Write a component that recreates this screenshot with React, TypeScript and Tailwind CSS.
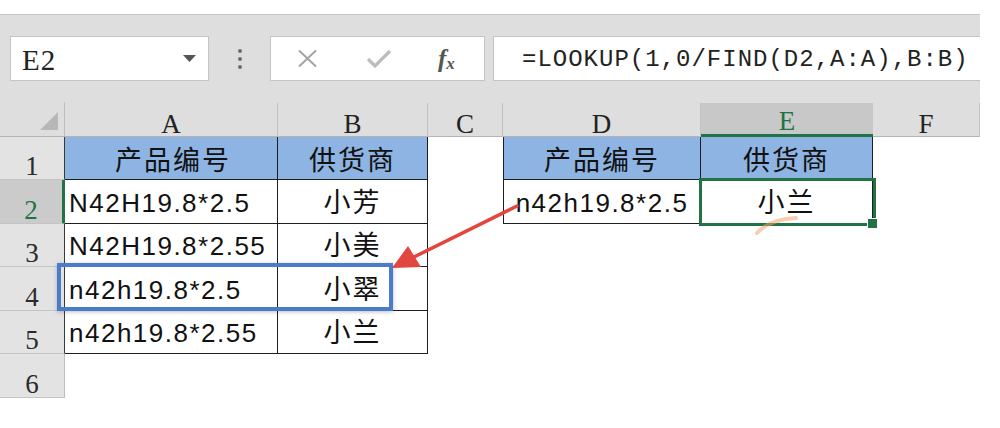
import React from 'react';

// Excel-style sheet: toolbar, column headers, and two small lookup tables
interface SheetRow {
  n: number;
  h: string;
  a?: string;
  b?: string;
  d?: string;
  e?: string;
}

const rows: SheetRow[] = [
  { n: 1, h: 'h-[43px]', a: '产品编号', b: '供货商', d: '产品编号', e: '供货商' },
  { n: 2, h: 'h-[44px]', a: 'N42H19.8*2.5', b: '小芳', d: 'n42h19.8*2.5', e: '小兰' },
  { n: 3, h: 'h-[43px]', a: 'N42H19.8*2.55', b: '小美' },
  { n: 4, h: 'h-[44px]', a: 'n42h19.8*2.5', b: '小翠' },
  { n: 5, h: 'h-[43px]', a: 'n42h19.8*2.55', b: '小兰' },
  { n: 6, h: 'h-[44px]' },
];

const cols = [
  { key: 'A', w: 'w-[213px]' },
  { key: 'B', w: 'w-[150px]' },
  { key: 'C', w: 'w-[75px]' },
  { key: 'D', w: 'w-[198px]' },
  { key: 'E', w: 'w-[172px]' },
  { key: 'F', w: 'w-[107px]' },
];

const Latin: React.FC<{ text: string }> = ({ text }) => (
  <span className="font-['Liberation_Sans',sans-serif] text-[26px] leading-[25px] tracking-[1.5px] text-[#111] whitespace-nowrap">
    {text}
  </span>
);

const Cjk: React.FC<{ text: string }> = ({ text }) => (
  <span className="font-['Noto_Sans_CJK_SC',sans-serif] text-[27px] leading-[27px] tracking-[2px] text-[#111] whitespace-nowrap mb-[2px]">
    {text}
  </span>
);

const Toolbar: React.FC = () => (
  <div className="w-[980px] h-[88px] border-t border-[#c6c6c6] bg-[#dedede] flex items-start pt-[21px] pl-[10px]">
    <div className="w-[199px] h-[45px] bg-white border border-[#c4c4c4] flex items-center justify-between pl-[11px] pr-[12px]">
      <span className="font-['Liberation_Serif',serif] text-[29px] leading-none tracking-[1px] text-[#222] mt-[3px]">E2</span>
      <svg width="13" height="8" viewBox="0 0 13 8">
        <path d="M0 0 L13 0 L6.5 7 Z" fill="#555" />
      </svg>
    </div>
    <div className="w-[61px] h-[45px] flex flex-col items-center justify-center gap-[4px]">
      <span className="w-[4px] h-[4px] rounded-full bg-[#6c6c6c]" />
      <span className="w-[4px] h-[4px] rounded-full bg-[#6c6c6c]" />
      <span className="w-[4px] h-[4px] rounded-full bg-[#6c6c6c]" />
    </div>
    <div className="w-[215px] h-[45px] bg-white border border-[#c4c4c4] flex items-center">
      <svg className="ml-[26px]" width="21" height="19" viewBox="0 0 21 19">
        <path d="M2 1.5 L19 17.5 M19 1.5 L2 17.5" stroke="#a4a4a4" strokeWidth="2" />
      </svg>
      <svg className="ml-[48px]" width="26" height="20" viewBox="0 0 26 20">
        <path d="M2 10 L9 17 L24 2" stroke="#bdbdbd" strokeWidth="3.2" fill="none" />
      </svg>
      <span className="ml-[46px] font-['Liberation_Serif',serif] italic font-bold text-[#555] text-[25px] leading-none">
        f<span className="text-[17px] align-[-2px]">x</span>
      </span>
    </div>
    <div className="ml-[8px] flex-1 h-[45px] bg-white border border-[#c4c4c4] border-r-0 flex items-center pl-[28px] overflow-hidden">
      <span className="font-['Liberation_Mono',monospace] text-[24px] leading-none tracking-[1px] text-[#222] whitespace-nowrap mt-[3px]">
        =LOOKUP(1,0/FIND(D2,A:A),B:B)
      </span>
    </div>
  </div>
);

const ColumnHeader: React.FC = () => (
  <div className="flex w-[980px] h-[35px] bg-[#dedede] border-b border-[#b4b4b4]">
    <div className="w-[65px] h-full border-r border-[#bdbdbd] flex items-end justify-end pr-[6px] pb-[6px]">
      <svg width="18" height="18" viewBox="0 0 18 18">
        <path d="M18 0 L18 18 L0 18 Z" fill="#b7b7b7" />
      </svg>
    </div>
    {cols.map((c) => (
      <div
        key={c.key}
        className={`${c.w} h-full flex items-end justify-center font-['Liberation_Serif',serif] text-[27px] leading-[25px] ${
          c.key === 'E'
            ? 'bg-[#c8c8c8] text-[#217346] border-b-[3px] border-[#217346] mt-[1px]'
            : 'text-[#222] border-r border-[#c2c2c2] mt-[1px]'
        }`}
      >
        {c.key}
      </div>
    ))}
  </div>
);

const BODY_BORDER = 'border-[#1e1e1e]';

const Row: React.FC<{ row: SheetRow }> = ({ row }) => {
  const isHead = row.n === 1;
  const inLeft = row.n <= 5;
  const inRight = row.n <= 2;
  const fill = isHead ? 'bg-[#8db4e2]' : 'bg-white';
  const pb = isHead ? 'pb-[5px]' : 'pb-[7px]';
  const txt = (s?: string) =>
    !s ? null : /[\u4e00-\u9fff]/.test(s) ? <Cjk text={s} /> : <Latin text={s} />;

  return (
    <div className={`flex w-[980px] ${row.h}`}>
      <div
        className={`w-[65px] h-full flex items-end justify-center border-b border-b-[#c4c4c4] font-['Liberation_Serif',serif] text-[27px] leading-[25px] ${
          row.n === 2
            ? 'bg-[#cbcbcb] border-r-[3px] border-r-[#217346] text-[#217346]'
            : inLeft
            ? 'bg-[#e3e3e3] border-r border-r-[#3a3a3a] text-[#2a2a2a]'
            : 'bg-[#e3e3e3] border-r border-r-[#bdbdbd] text-[#2a2a2a]'
        }`}
      >
        {row.n}
      </div>
      <div
        className={`w-[213px] h-full flex items-end pl-[4px] ${pb} ${
          inLeft ? `${fill} border-r border-b ${BODY_BORDER}` : 'bg-white'
        } ${isHead ? 'justify-center' : 'justify-start'}`}
      >
        {txt(row.a)}
      </div>
      <div
        className={`w-[150px] h-full flex items-end justify-center ${pb} ${
          inLeft ? `${fill} border-r border-b ${BODY_BORDER}` : 'bg-white'
        }`}
      >
        {txt(row.b)}
      </div>
      <div className="w-[75px] h-full bg-white" />
      <div
        className={`w-[198px] h-full flex items-end justify-center ${pb} ${
          inRight ? `${fill} border-l border-r border-b ${BODY_BORDER}` : 'bg-white'
        }`}
      >
        {txt(row.d)}
      </div>
      <div
        className={`w-[172px] h-full flex items-end justify-center ${pb} ${
          inRight ? `${fill} border-r border-b ${BODY_BORDER}` : 'bg-white'
        }`}
      >
        {txt(row.e)}
      </div>
      <div className="w-[107px] h-full bg-white" />
    </div>
  );
};

const App: React.FC = () => {
  return (
    <div className="relative w-[1000px] h-[428px] bg-white overflow-hidden">
      <div className="h-[14px]" />
      <Toolbar />
      <ColumnHeader />
      {rows.map((r) => (
        <Row key={r.n} row={r} />
      ))}

      {/* active cell E2 with fill handle */}
      <div className="absolute left-[699px] top-[178px] w-[177px] h-[48px] border-[3px] border-[#217346]" />
      <div className="absolute left-[867px] top-[218px] w-[11px] h-[11px] bg-[#217346] border border-white" />

      {/* blue highlight around row 4 */}
      <div className="absolute left-[57px] top-[263px] w-[336px] h-[48px] border-4 border-[#4a7bcc] shadow-[0_1px_4px_rgba(0,0,0,0.25)]" />

      {/* annotation arrow + cursor smudge */}
      <svg className="absolute left-0 top-0 pointer-events-none" width="1000" height="428" viewBox="0 0 1000 428">
        <path d="M757 233 Q770 219 796 218" stroke="#f0a26e" strokeWidth="4" fill="none" opacity="0.55" strokeLinecap="round" />
        <line x1="517" y1="206" x2="412" y2="258" stroke="#e2463e" strokeWidth="3.5" strokeLinecap="round" />
        <polygon points="392,268 408,246 421,267" fill="#e2463e" />
      </svg>
    </div>
  );
};

export default App;
